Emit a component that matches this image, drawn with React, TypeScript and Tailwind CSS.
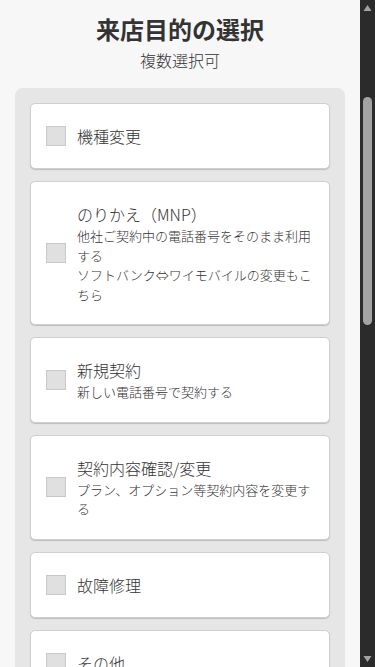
import React from "react";

type Item = { title: string; sub?: string[] };

const items: Item[] = [
  { title: "機種変更" },
  {
    title: "のりかえ（MNP）",
    sub: ["他社ご契約中の電話番号をそのまま利用する", "ソフトバンク⇔ワイモバイルの変更もこちら"],
  },
  { title: "新規契約", sub: ["新しい電話番号で契約する"] },
  { title: "契約内容確認/変更", sub: ["プラン、オプション等契約内容を変更する"] },
  { title: "故障修理" },
  { title: "その他" },
];

function ScrollBar() {
  return (
    <div className="w-[15px] shrink-0 h-full bg-[#2b2b2b] flex flex-col">
      <div className="h-[15px] flex items-center justify-center">
        <svg width="9" height="8" viewBox="0 0 9 8">
          <polygon points="4.5,1 8.5,7 0.5,7" fill="#a3a3a3" />
        </svg>
      </div>
      <div className="mt-[82px] mx-auto w-[9px] h-[228px] rounded-full bg-[#a3a3a3]" />
      <div className="flex-1" />
      <div className="h-[15px] flex items-center justify-center mb-[1px]">
        <svg width="9" height="8" viewBox="0 0 9 8">
          <polygon points="0.5,1 8.5,1 4.5,7" fill="#a3a3a3" />
        </svg>
      </div>
    </div>
  );
}

export default function App() {
  return (
    <div
      className="h-screen flex overflow-hidden bg-[#f7f7f7] text-[#333333]"
      style={{ fontFamily: '"Noto Sans CJK JP", "Noto Sans", sans-serif' }}
    >
      <div className="flex-1 min-w-0 overflow-hidden">
        <div className="pt-[11px] pb-[16px] text-center">
          <h1 className="text-[24px] leading-[36px] font-bold">来店目的の選択</h1>
          <p className="text-[16px] leading-[24px] mt-px font-light">複数選択可</p>
        </div>
        <div className="mx-[15px] mb-[20px] rounded-[8px] bg-[#e6e6e6] p-[15px] flex flex-col gap-[12px]">
          {items.map((it) => (
            <label
              key={it.title}
              className="flex items-center gap-[11px] rounded-[5px] border border-[#cfcfcf] bg-white px-[15px] py-[20px] shadow-[0_1px_1px_rgba(0,0,0,0.18)]"
            >
              <span className="shrink-0 w-[20px] h-[20px] bg-[#e0e0e0] border border-[#c9c9c9]" />
              <span className="flex flex-col min-w-0 font-light">
                <span className="text-[16px] leading-[24px]">{it.title}</span>
                {it.sub &&
                  it.sub.map((s) => (
                    <span key={s} className="text-[13px] leading-[19.5px]">
                      {s}
                    </span>
                  ))}
              </span>
            </label>
          ))}
        </div>
      </div>
      <ScrollBar />
    </div>
  );
}
